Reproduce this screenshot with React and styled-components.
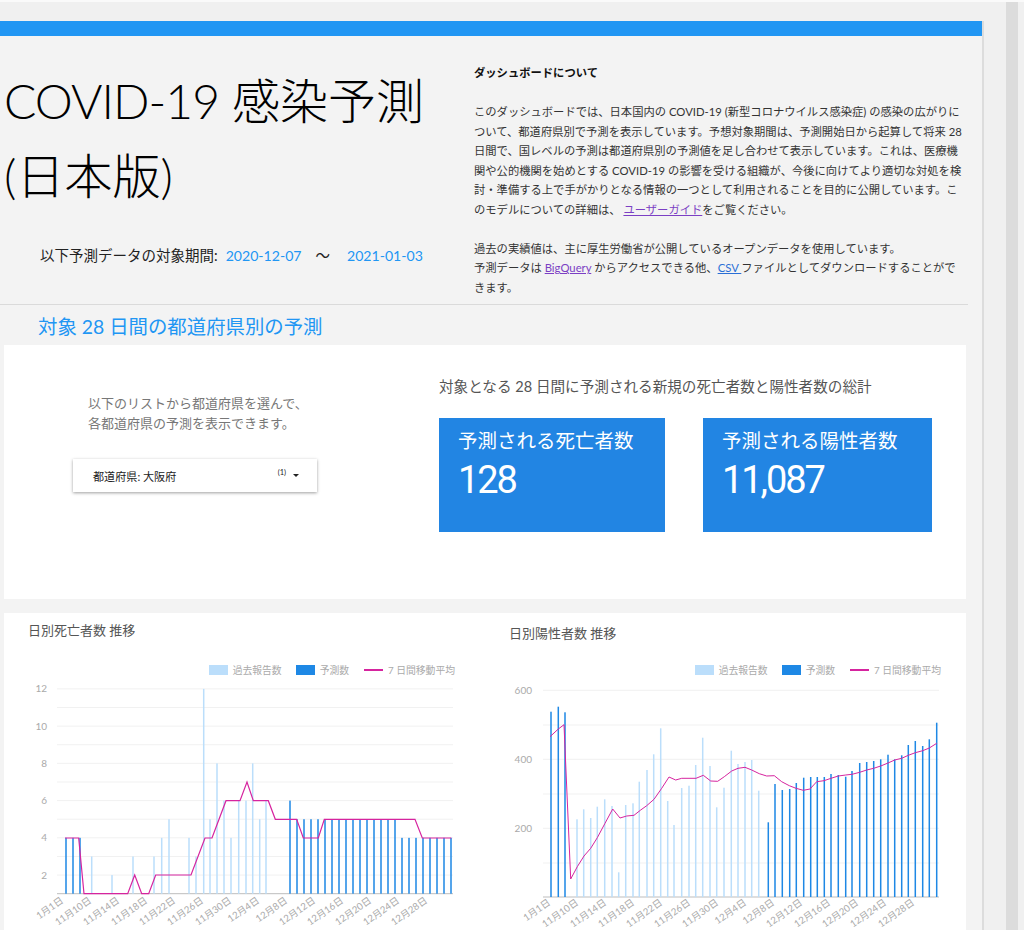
import React from 'react';
import styled, { createGlobalStyle } from 'styled-components';

const SANS = `Lato, 'Noto Sans CJK JP', sans-serif`;

const GlobalStyle = createGlobalStyle`
  html, body {
    margin: 0;
    padding: 0;
    background: #f0f0f0;
    font-family: ${SANS};
  }
  #root {
    height: 930px;
    overflow: hidden;
  }
`;

const Window = styled.div`
  display: flex;
  height: 930px;
  overflow: hidden;
  border-top: 2px solid #fafafa;
  box-sizing: border-box;
`;

const Sheet = styled.main`
  width: 982px;
  flex: none;
  margin-top: 19px;
  background: #f3f3f3;
  border-right: 2px solid #dcdcdc;
`;

const Gutter = styled.div`
  width: 22px;
  flex: none;
`;

const Scrollbar = styled.div`
  width: 12px;
  flex: none;
  background: #dcdcdc;
`;

const TopBar = styled.div`
  height: 15px;
  background: #2196f3;
`;

const Header = styled.header`
  display: flex;
  width: 968px;
  height: 269px;
  box-sizing: border-box;
  border-bottom: 1px solid #dadada;
`;

const Intro = styled.div`
  width: 474px;
  flex: none;
  padding-top: 27px;
`;

const Title = styled.h1`
  margin: 0 0 0 4px;
  font-size: 48px;
  line-height: 75px;
  font-weight: 300;
  color: #000;
  white-space: nowrap;
`;

const TitleLatin = styled.span`
  letter-spacing: -1px;
`;

const Period = styled.div`
  display: flex;
  align-items: center;
  margin-top: 33px;
  padding-left: 40px;
  font-size: 14.5px;
  line-height: 20px;
  color: #222;
  white-space: nowrap;
`;

const PeriodDate = styled.span`
  color: #2196f3;
  font-size: 14.1px;
  margin-left: ${p => p.$gap}px;
`;

const PeriodDash = styled.span`
  margin-left: 14px;
`;

const About = styled.div`
  padding-top: 27px;
  font-size: 11.3px;
  line-height: 19.5px;
  color: #333;
  white-space: nowrap;
`;

const AboutHead = styled.div`
  font-weight: 700;
  color: #111;
`;

const AboutPara = styled.p`
  margin: 19.5px 0 0;
`;

const AboutLink = styled.a`
  color: ${p => (p.$visited ? '#7b3fc4' : '#2a6fd6')};
  text-decoration: underline;
`;

const SectionTitle = styled.h2`
  margin: 0;
  padding: 11px 0 0 38px;
  height: 40px;
  box-sizing: border-box;
  font-size: 19.4px;
  line-height: 22px;
  font-weight: 400;
  color: #2196f3;
  white-space: nowrap;
`;

const WhiteCard = styled.section`
  display: flex;
  width: 962px;
  margin-left: 4px;
  background: #fff;
`;

const SummaryCard = styled(WhiteCard)`
  height: 254px;
  margin-bottom: 14px;
`;

const PickerColumn = styled.div`
  width: 435px;
  flex: none;
  padding-top: 48px;
`;

const PickerText = styled.p`
  margin: 0 0 26px 84px;
  font-size: 13px;
  line-height: 20px;
  color: #777;
  white-space: nowrap;
`;

const Picker = styled.div`
  display: flex;
  align-items: center;
  width: 244px;
  height: 33px;
  margin-left: 69px;
  padding: 0 18px 0 20px;
  box-sizing: border-box;
  background: #fff;
  box-shadow: 0 1px 3px rgba(0, 0, 0, 0.38);
  font-size: 11.1px;
  color: #222;
`;

const PickerLabel = styled.span`
  flex: 1;
`;

const PickerCount = styled.sup`
  font-size: 7.5px;
  line-height: 1;
  margin-right: 7px;
  align-self: center;
  position: relative;
  top: -3px;
`;

const PickerCaret = styled.span`
  width: 0;
  height: 0;
  border-left: 3px solid transparent;
  border-right: 3px solid transparent;
  border-top: 3px solid #222;
`;

const TotalsColumn = styled.div`
  padding-top: 32px;
`;

const TotalsHead = styled.div`
  font-size: 14.6px;
  line-height: 20px;
  color: #555;
  margin-bottom: 21px;
  white-space: nowrap;
`;

const Tiles = styled.div`
  display: flex;
  gap: 38px;
`;

const Tile = styled.div`
  width: ${p => p.$width}px;
  height: 114px;
  box-sizing: border-box;
  padding: 10px 19px;
  background: #2285e3;
  color: #fff;
`;

const TileLabel = styled.div`
  font-size: 19.5px;
  line-height: 26px;
  white-space: nowrap;
`;

const TileValue = styled.div`
  margin-top: 4px;
  font-family: Roboto, sans-serif;
  font-size: 38px;
  font-weight: 400;
  line-height: 44px;
  letter-spacing: -2.1px;
`;

const ChartsCard = styled(WhiteCard)`
  height: 317px;
`;

const ChartPanel = styled.div`
  width: ${p => p.$width}px;
  flex: none;
`;

const ChartTitle = styled.div`
  height: 47px;
  box-sizing: border-box;
  padding: ${p => p.$top}px 0 0 ${p => p.$left}px;
  font-size: 13px;
  line-height: 18px;
  color: #555;
`;

const Legend = styled.div`
  display: flex;
  justify-content: flex-end;
  align-items: center;
  gap: 5px;
  height: 20px;
  padding-right: ${p => p.$right}px;
  font-size: 9.8px;
  color: #aaa;
  white-space: nowrap;
`;

const Swatch = styled.span`
  width: 19px;
  height: 10px;
  background: ${p => p.$color};
  margin-left: ${p => p.$gap || 0}px;
`;

const LineKey = styled.span`
  width: 19px;
  height: 1.5px;
  background: #d6249f;
  margin-left: 10px;
`;

const Plot = styled.svg`
  display: block;
`;

const DARK = '#1e88e5';
const LIGHT = '#bbdefb';
const TICKS = ['1月1日', '11月10日', '11月14日', '11月18日', '11月22日', '11月26日', '11月30日', '12月4日', '12月8日', '12月12日', '12月16日', '12月20日', '12月24日', '12月28日'];

// page coordinates read off the reference: [x, top of bar]
const deathY = v => 893.7 - (v - 1) * 18.62;
const deathDark = [
  ...[66, 73, 80].map(x => [x, deathY(4)]),
  [290, deathY(6)],
  ...Array.from({ length: 15 }, (_, i) => [297 + i * 7, deathY(5)]),
  ...Array.from({ length: 8 }, (_, i) => [402 + i * 7, deathY(4)]),
];
const deathLight = [[91.7, 3], [112, 2], [133, 3], [154, 3], [161.7, 4], [169, 5], [189, 4], [196, 3], [203.7, 12], [210, 5], [217, 8], [224, 6], [231, 4], [238.7, 6], [246, 6], [252.7, 8], [259.7, 5], [266, 6]].map(([x, v]) => [x, deathY(v)]);
const deathLine = [[65, 838], [78.7, 838], [84, 893.7], [127.7, 893.7], [134.7, 875], [141.7, 893.7], [148.7, 893.7], [155.7, 875], [191, 875], [205, 838], [212, 838], [226, 800.7], [240, 800.7], [247, 782], [253.3, 800.7], [268.3, 800.7], [275.3, 819.3], [296.7, 819.3], [303.3, 838], [318.3, 838], [324.3, 819.3], [415, 819.3], [422.3, 838], [451.3, 838]];

const casesDark = [[551, 711.7], [558.3, 706.7], [565, 712.3], [768.3, 822.3], [775, 784], [782.3, 790], [789.7, 789], [796.3, 783], [803.7, 777.7], [810.7, 777], [817.3, 777], [824.3, 777], [831, 774], [838.3, 775], [845.7, 776.7], [852, 771], [859.7, 763], [866.7, 762], [873.7, 761], [880.7, 759.3], [888, 754.7], [894.7, 759.3], [901.7, 755.3], [908.3, 745], [915.3, 741], [922.7, 746], [929.3, 739.3], [936.7, 722.7]];
const casesLight = [[577, 819.3], [583.7, 809.3], [590.7, 818], [597.3, 806.7], [604.7, 799.3], [612, 806], [618.7, 872.3], [625.7, 805], [633, 803.3], [639.3, 781.7], [647, 770], [653.7, 754.3], [660.7, 728.3], [667.7, 801], [674, 825], [681.7, 788], [689, 785.7], [695.7, 765], [702.7, 737.7], [710, 766], [716.7, 807.3], [724, 787.7], [731.3, 750.7], [738, 764], [745, 762], [751.7, 760], [758.7, 790.7]];
const casesLine = [[550, 736.7], [558.3, 729], [564, 724.7], [570.7, 879], [577.3, 866.7], [584, 856], [590.7, 848.3], [597.3, 837.7], [605, 823.3], [612.7, 809], [620, 818], [626.7, 816], [634, 815.3], [640.7, 810], [646.7, 805.7], [654, 799.3], [661.7, 788.3], [669, 777], [675.7, 780], [681.7, 778.3], [689, 778.3], [696, 778.3], [703.3, 775.3], [710.7, 781], [717.7, 781.3], [724.3, 776.7], [731.7, 771], [738, 768.3], [745, 767.3], [751.7, 770], [759.3, 773.7], [766.7, 776], [774.3, 775.7], [781.7, 781.7], [789.3, 785.7], [796, 788.3], [803.3, 790.3], [810, 789], [816.7, 781.7], [824, 780.7], [831, 778.3], [838.3, 776], [845.7, 775], [852, 774.3], [859.7, 772.3], [866.7, 770], [873.7, 768.3], [880.7, 766], [888, 763], [894.7, 760], [901.7, 758.3], [908.3, 755.3], [915.3, 752.7], [922.7, 750.7], [929.3, 748], [936.7, 743.3]];

const charts = [
  {
    title: '日別死亡者数 推移',
    width: 485,
    viewX: 4,
    titleTop: 8,
    titleLeft: 24,
    legendRight: 34,
    x0: 57,
    x1: 453,
    base: 893.7,
    grid: Array.from({ length: 11 }, (_, i) => deathY(i + 2)),
    yTicks: [2, 4, 6, 8, 10, 12].map(v => [v, deathY(v)]),
    labelRight: 47,
    tickX: 64,
    tickY: 902,
    dark: deathDark,
    light: deathLight,
    line: deathLine,
    lineWidth: 1.2,
  },
  {
    title: '日別陽性者数 推移',
    width: 477,
    viewX: 489,
    titleTop: 11,
    titleLeft: 20,
    legendRight: 25,
    x0: 543,
    x1: 939,
    base: 897,
    grid: [690.3, 725, 759.3, 794, 828.3, 863],
    yTicks: [[600, 690.3], [400, 759.3], [200, 828.3]],
    labelRight: 532,
    tickX: 551,
    tickY: 904,
    dark: casesDark,
    light: casesLight,
    line: casesLine,
    lineWidth: 1,
  },
];

const Chart = ({ c }) => (
  <ChartPanel $width={c.width}>
    <ChartTitle $top={c.titleTop} $left={c.titleLeft}>{c.title}</ChartTitle>
    <Legend $right={c.legendRight}>
      <Swatch $color={LIGHT} />
      過去報告数
      <Swatch $color={DARK} $gap={9} />
      予測数
      <LineKey />
      7 日間移動平均
    </Legend>
    <Plot width={c.width} height={250} viewBox={`${c.viewX} 680 ${c.width} 250`}>
      {c.grid.map(y => (
        <line key={y} x1={c.x0} x2={c.x1} y1={y} y2={y} stroke="#f1f1f1" />
      ))}
      <line x1={c.x0} x2={c.x1} y1={c.base} y2={c.base} stroke="#bdbdbd" />
      {c.light.map(([x, top]) => (
        <rect key={x} x={x - 0.75} y={top} width={1.5} height={c.base - top} fill={LIGHT} />
      ))}
      {c.dark.map(([x, top]) => (
        <rect key={x} x={x - 0.75} y={top} width={1.5} height={c.base - top} fill={DARK} />
      ))}
      <polyline points={c.line.map(p => p.join(',')).join(' ')} fill="none" stroke="#d6249f" strokeWidth={c.lineWidth} />
      {c.yTicks.map(([label, y]) => (
        <text key={label} x={c.labelRight} y={y + 3.5} textAnchor="end" fontSize="10" fill="#aaa">{label}</text>
      ))}
      {TICKS.map((t, i) => {
        const x = c.tickX + i * 28;
        return (
          <text key={t} x={x} y={c.tickY} textAnchor="end" fontSize="9.6" fill="#aaa" transform={`rotate(-35 ${x} ${c.tickY})`}>{t}</text>
        );
      })}
    </Plot>
  </ChartPanel>
);

export default function App() {
  return (
    <>
      <GlobalStyle />
      <Window>
        <Sheet>
          <TopBar />
          <Header>
            <Intro>
              <Title><TitleLatin>COVID-19</TitleLatin> 感染予測<br />(日本版)</Title>
              <Period>
                以下予測データの対象期間:
                <PeriodDate $gap={8}>2020-12-07</PeriodDate>
                <PeriodDash>〜</PeriodDash>
                <PeriodDate $gap={17}>2021-01-03</PeriodDate>
              </Period>
            </Intro>
            <About>
              <AboutHead>ダッシュボードについて</AboutHead>
              <AboutPara>
                このダッシュボードでは、日本国内の COVID-19 (新型コロナウイルス感染症) の感染の広がりに<br />
                ついて、都道府県別で予測を表示しています。予想対象期間は、予測開始日から起算して将来 28<br />
                日間で、国レベルの予測は都道府県別の予測値を足し合わせて表示しています。これは、医療機<br />
                関や公的機関を始めとする COVID-19 の影響を受ける組織が、今後に向けてより適切な対処を検<br />
                討・準備する上で手がかりとなる情報の一つとして利用されることを目的に公開しています。こ<br />
                のモデルについての詳細は、 <AboutLink href="#" $visited>ユーザーガイド</AboutLink>をご覧ください。
              </AboutPara>
              <AboutPara>
                過去の実績値は、主に厚生労働省が公開しているオープンデータを使用しています。<br />
                予測データは <AboutLink href="#" $visited>BigQuery</AboutLink> からアクセスできる他、<AboutLink href="#">CSV </AboutLink>ファイルとしてダウンロードすることがで<br />
                きます。
              </AboutPara>
            </About>
          </Header>
          <SectionTitle>対象 28 日間の都道府県別の予測</SectionTitle>
          <SummaryCard>
            <PickerColumn>
              <PickerText>以下のリストから都道府県を選んで、<br />各都道府県の予測を表示できます。</PickerText>
              <Picker>
                <PickerLabel>都道府県: 大阪府</PickerLabel>
                <PickerCount>(1)</PickerCount>
                <PickerCaret />
              </Picker>
            </PickerColumn>
            <TotalsColumn>
              <TotalsHead>対象となる 28 日間に予測される新規の死亡者数と陽性者数の総計</TotalsHead>
              <Tiles>
                <Tile $width={226}>
                  <TileLabel>予測される死亡者数</TileLabel>
                  <TileValue>128</TileValue>
                </Tile>
                <Tile $width={229}>
                  <TileLabel>予測される陽性者数</TileLabel>
                  <TileValue>11,087</TileValue>
                </Tile>
              </Tiles>
            </TotalsColumn>
          </SummaryCard>
          <ChartsCard>
            {charts.map(c => <Chart key={c.title} c={c} />)}
          </ChartsCard>
        </Sheet>
        <Gutter />
        <Scrollbar />
      </Window>
    </>
  );
}
